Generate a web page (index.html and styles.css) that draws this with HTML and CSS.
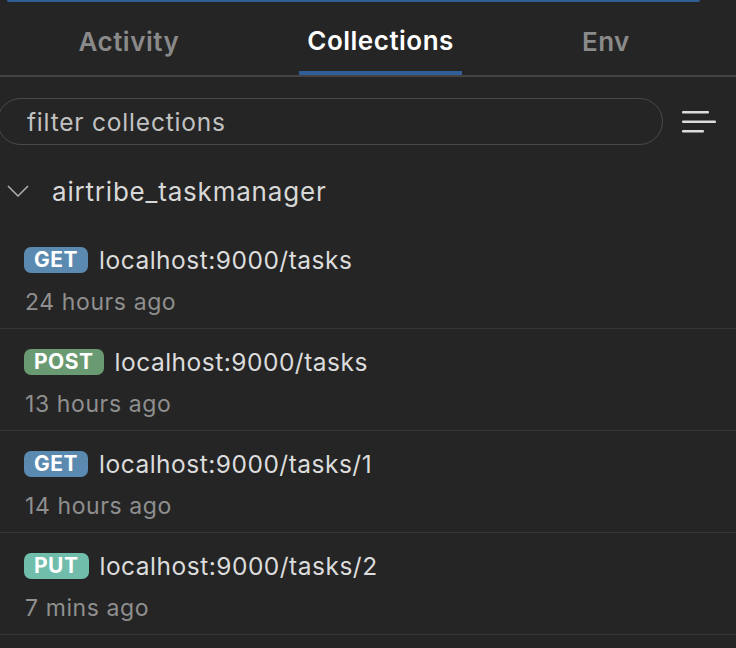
FILE: index.html
```html
<!DOCTYPE html>
<html>
<head>
<meta charset="utf-8">
<link rel="stylesheet" href="styles.css">
</head>
<body>
<div class="topbar"></div>
<nav class="tabs">
  <div class="tab">Activity</div>
  <div class="tab active">Collections</div>
  <div class="tab">Env</div>
</nav>
<div class="search-row">
  <div class="search">filter collections</div>
  <svg class="menu" width="36" height="24" viewBox="0 0 36 24">
    <rect x="0" y="0" width="27" height="2.5" rx="1" fill="#dcdcdc"/>
    <rect x="0" y="9.5" width="34" height="2.5" rx="1" fill="#dcdcdc"/>
    <rect x="0" y="19" width="22" height="2.5" rx="1" fill="#dcdcdc"/>
  </svg>
</div>
<div class="collection">
  <svg class="chev" width="22" height="12" viewBox="0 0 22 12">
    <polyline points="1,1 11,11 21,1" fill="none" stroke="#b0b0b0" stroke-width="1.5"/>
  </svg>
  <span class="cname">airtribe_taskmanager</span>
</div>
<div class="list">
  <div class="item">
    <div class="req"><span class="badge get">GET</span><span class="url">localhost:9000/tasks</span></div>
    <div class="time">24 hours ago</div>
  </div>
  <div class="item">
    <div class="req"><span class="badge post">POST</span><span class="url">localhost:9000/tasks</span></div>
    <div class="time">13 hours ago</div>
  </div>
  <div class="item">
    <div class="req"><span class="badge get">GET</span><span class="url">localhost:9000/tasks/1</span></div>
    <div class="time">14 hours ago</div>
  </div>
  <div class="item">
    <div class="req"><span class="badge put">PUT</span><span class="url">localhost:9000/tasks/2</span></div>
    <div class="time">7 mins ago</div>
  </div>
</div>
</body>
</html>
```
FILE: styles.css
```css
html, body {
  margin: 0;
  padding: 0;
  background: #252525;
  font-family: Inter, "Noto Sans", sans-serif;
  overflow: hidden;
}
.topbar {
  height: 2px;
  margin: 0 36px 0 7px;
  background: #2f5e98;
  border-radius: 0 0 2px 2px;
}
.tabs {
  display: flex;
  gap: 111px;
  padding-left: 70px;
  height: 73px;
  border-bottom: 2px solid #444444;
}
.tab {
  padding: 8px 8.5px 0;
  font-size: 26px;
  font-weight: 600;
  letter-spacing: 0.5px;
  color: #8a8a8a;
  height: 73px;
  box-sizing: border-box;
  line-height: 63px;
}
.tab.active {
  color: #ffffff;
  border-bottom: 4px solid #2f5e98;
  line-height: 61px;
}
.search-row {
  display: flex;
  align-items: center;
  margin-top: 21px;
  margin-left: -3px;
}
.search {
  width: 666px;
  height: 47px;
  box-sizing: border-box;
  border: 1.5px solid #4a4a4a;
  border-radius: 24px;
  padding-left: 29px;
  font-size: 24.5px;
  letter-spacing: 0.8px;
  line-height: 47px;
  color: #c2c2c2;
}
.menu {
  margin-left: 19px;
  margin-top: 2px;
}
.collection {
  display: flex;
  align-items: center;
  height: 60px;
  margin-top: 16px;
}
.chev {
  margin-left: 7px;
  margin-right: 23px;
}
.cname {
  font-size: 26px;
  letter-spacing: 0.8px;
  color: #d8d8d8;
}
.list {
  margin-top: 6px;
}
.item {
  padding: 20px 24px 12px;
  border-bottom: 1px solid #353535;
}
.req {
  display: flex;
  align-items: center;
  height: 26px;
}
.badge {
  height: 26px;
  line-height: 26px;
  padding: 0 10px;
  border-radius: 7px;
  color: #ffffff;
  font-weight: 700;
  font-size: 21px;
  letter-spacing: 0.5px;
}
.badge.get { background: #5b8ab0; }
.badge.post { background: #6a9a71; }
.badge.put { background: #70bdac; }
.url {
  margin-left: 11px;
  font-size: 24.5px;
  letter-spacing: 0.5px;
  color: #dcdcdc;
}
.time {
  margin-top: 15px;
  padding-left: 1px;
  line-height: 28px;
  font-size: 23px;
  letter-spacing: 0.6px;
  color: #8f8f8f;
}
```
